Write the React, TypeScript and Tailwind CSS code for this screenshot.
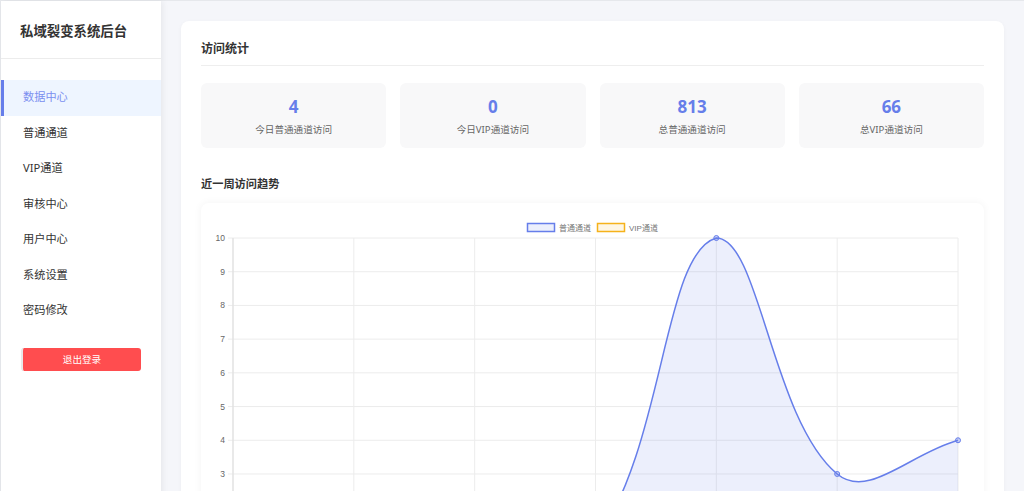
import React from "react";

const menu = ["数据中心", "普通通道", "VIP通道", "审核中心", "用户中心", "系统设置", "密码修改"];

const stats = [
  { value: 4, label: "今日普通通道访问" },
  { value: 0, label: "今日VIP通道访问" },
  { value: 813, label: "总普通通道访问" },
  { value: 66, label: "总VIP通道访问" },
];

const days = ["01-09", "01-10", "01-11", "01-12", "01-13", "01-14", "01-15"];
const normal = [0, 0, 0, 1, 10, 3, 4];
const vip = [0, 0, 0, 0, 1, 0, 0];

// chart area (svg coords)
const LEFT = 32;
const RIGHT = 757;
const TOP = 35;
const UNIT = 33.71;
const BOTTOM = TOP + UNIT * 10;
const STEP = (RIGHT - LEFT) / 6;

type Pt = { x: number; y: number };

const clamp = (v: number, a: number, b: number) => Math.max(a, Math.min(b, v));

// same spline as chart.js with tension 0.4
function spline(values: number[]) {
  const pts: Pt[] = values.map((v, i) => ({ x: LEFT + i * STEP, y: TOP + (10 - v) * UNIT }));
  const cps = pts.map((cur, i) => {
    const prev = pts[i - 1] || cur;
    const next = pts[i + 1] || cur;
    const d01 = Math.hypot(cur.x - prev.x, cur.y - prev.y);
    const d12 = Math.hypot(next.x - cur.x, next.y - cur.y);
    let s01 = d01 / (d01 + d12);
    let s12 = d12 / (d01 + d12);
    if (isNaN(s01)) s01 = 0;
    if (isNaN(s12)) s12 = 0;
    const fa = 0.4 * s01;
    const fb = 0.4 * s12;
    const c1 = { x: cur.x - fa * (next.x - prev.x), y: cur.y - fa * (next.y - prev.y) };
    const c2 = { x: cur.x + fb * (next.x - prev.x), y: cur.y + fb * (next.y - prev.y) };
    const cap = (p: Pt) => ({ x: clamp(p.x, LEFT, RIGHT), y: clamp(p.y, TOP, BOTTOM) });
    return { c1: cap(c1), c2: cap(c2) };
  });
  let d = `M${pts[0].x},${pts[0].y}`;
  for (let i = 1; i < pts.length; i++) {
    const a = cps[i - 1].c2;
    const b = cps[i].c1;
    d += ` C${a.x},${a.y} ${b.x},${b.y} ${pts[i].x},${pts[i].y}`;
  }
  const area = `${d} L${RIGHT},${BOTTOM} L${LEFT},${BOTTOM} Z`;
  return { d, area, pts };
}

const TrendChart = () => {
  const n = spline(normal);
  const v = spline(vip);
  const ticks = Array.from({ length: 11 }, (_, i) => 10 - i);

  return (
    <svg width="783" height="420" viewBox="0 0 783 420" className="block">
      {/* legend */}
      <rect x="326.5" y="20.5" width="27" height="8" fill="rgba(102,126,234,0.12)" stroke="#667eea" strokeWidth="1.5" />
      <text x="358" y="27.5" fontSize="8" fill="#777" fontFamily="'Liberation Sans','Noto Sans CJK SC',sans-serif">普通通道</text>
      <rect x="396.5" y="20.5" width="27" height="8" fill="rgba(246,180,30,0.12)" stroke="#f5b21b" strokeWidth="1.5" />
      <text x="428" y="27.5" fontSize="8" fill="#777" fontFamily="'Liberation Sans','Noto Sans CJK SC',sans-serif">VIP通道</text>

      {/* grid */}
      {ticks.map((t) => {
        const y = TOP + (10 - t) * UNIT;
        return (
          <g key={t}>
            <line x1={LEFT - 5} x2={RIGHT} y1={y} y2={y} stroke="#ececec" strokeWidth="1" />
            <text x={LEFT - 8} y={y + 3} fontSize="8.5" textAnchor="end" fill="#666" fontFamily="'Liberation Sans',sans-serif">
              {t}
            </text>
          </g>
        );
      })}
      {days.map((day, i) => {
        const x = LEFT + i * STEP;
        return (
          <g key={day}>
            <line x1={x} x2={x} y1={TOP} y2={BOTTOM + 5} stroke={i === 0 ? "#e2e2e2" : "#ececec"} strokeWidth={i === 0 ? 1.5 : 1} />
            <text x={x} y={BOTTOM + 16} fontSize="8.5" textAnchor="middle" fill="#666" fontFamily="'Liberation Sans',sans-serif">
              {day}
            </text>
          </g>
        );
      })}

      {/* datasets */}
      <path d={v.area} fill="rgba(246,180,30,0.1)" />
      <path d={v.d} fill="none" stroke="#f5b21b" strokeWidth="1.5" />
      {v.pts.map((p, i) => (
        <circle key={i} cx={p.x} cy={p.y} r="2.5" fill="rgba(246,180,30,0.3)" stroke="#f5b21b" strokeWidth="1" />
      ))}
      <path d={n.area} fill="rgba(102,126,234,0.12)" />
      <path d={n.d} fill="none" stroke="#667eea" strokeWidth="1.5" />
      {n.pts.map((p, i) => (
        <circle key={i} cx={p.x} cy={p.y} r="2.5" fill="rgba(102,126,234,0.35)" stroke="#667eea" strokeWidth="1" />
      ))}
    </svg>
  );
};

export default function App() {
  return (
    <div className="flex w-screen min-h-[1700px] border-l border-t border-[#e6e8ec] bg-[#f5f6fa] font-['Noto_Sans','Noto_Sans_CJK_SC',sans-serif] text-[#333]">
      <aside className="w-[160px] shrink-0 bg-white shadow-[2px_0_6px_rgba(0,0,0,0.06)]">
        <div className="h-[58px] border-b border-[#ececec] pl-[19px] pt-[21px] text-[13.4px] font-bold leading-[18px] text-[#333]">
          私域裂变系统后台
        </div>
        <nav className="pt-[21px]">
          {menu.map((item, i) => (
            <div
              key={item}
              className={`flex h-[35.5px] items-center border-l-[3px] pl-[19px] text-[11.2px] ${
                i === 0 ? "border-[#667eea] bg-[#eef5ff] text-[#7b8ff0]" : "border-transparent text-[#333]"
              }`}
            >
              {item}
            </div>
          ))}
        </nav>
        <div className="px-5 pt-[16px]">
          <button className="h-[23px] w-[120px] rounded-[3px] border-l-2 border-[#e9e9e9] bg-[#ff4d4f] text-[9.6px] text-white">
            退出登录
          </button>
        </div>
      </aside>

      <main className="flex-1 p-5">
        <div className="rounded-lg bg-white px-5 pt-5 pb-6 shadow-[0_1px_4px_rgba(0,0,0,0.04)]">
          <div className="border-b border-[#eeeeee] pb-2 text-[12px] font-bold leading-4 text-[#333]">访问统计</div>

          <div className="mt-[17px] grid grid-cols-4 gap-[14px]">
            {stats.map((s) => (
              <div key={s.label} className="flex h-[65px] flex-col items-center rounded-md bg-[#f8f8f9] pt-[14px]">
                <div className="text-[17px] font-bold leading-5 text-[#667eea]">{s.value}</div>
                <div className="mt-[5px] text-[9.6px] leading-4 text-[#666]">{s.label}</div>
              </div>
            ))}
          </div>

          <div className="mt-[28px] text-[11.2px] font-bold leading-4 text-[#333]">近一周访问趋势</div>

          <div className="mt-[11px] rounded-lg bg-white shadow-[0_0_8px_rgba(0,0,0,0.05)]">
            <TrendChart />
          </div>
        </div>
      </main>
    </div>
  );
}
